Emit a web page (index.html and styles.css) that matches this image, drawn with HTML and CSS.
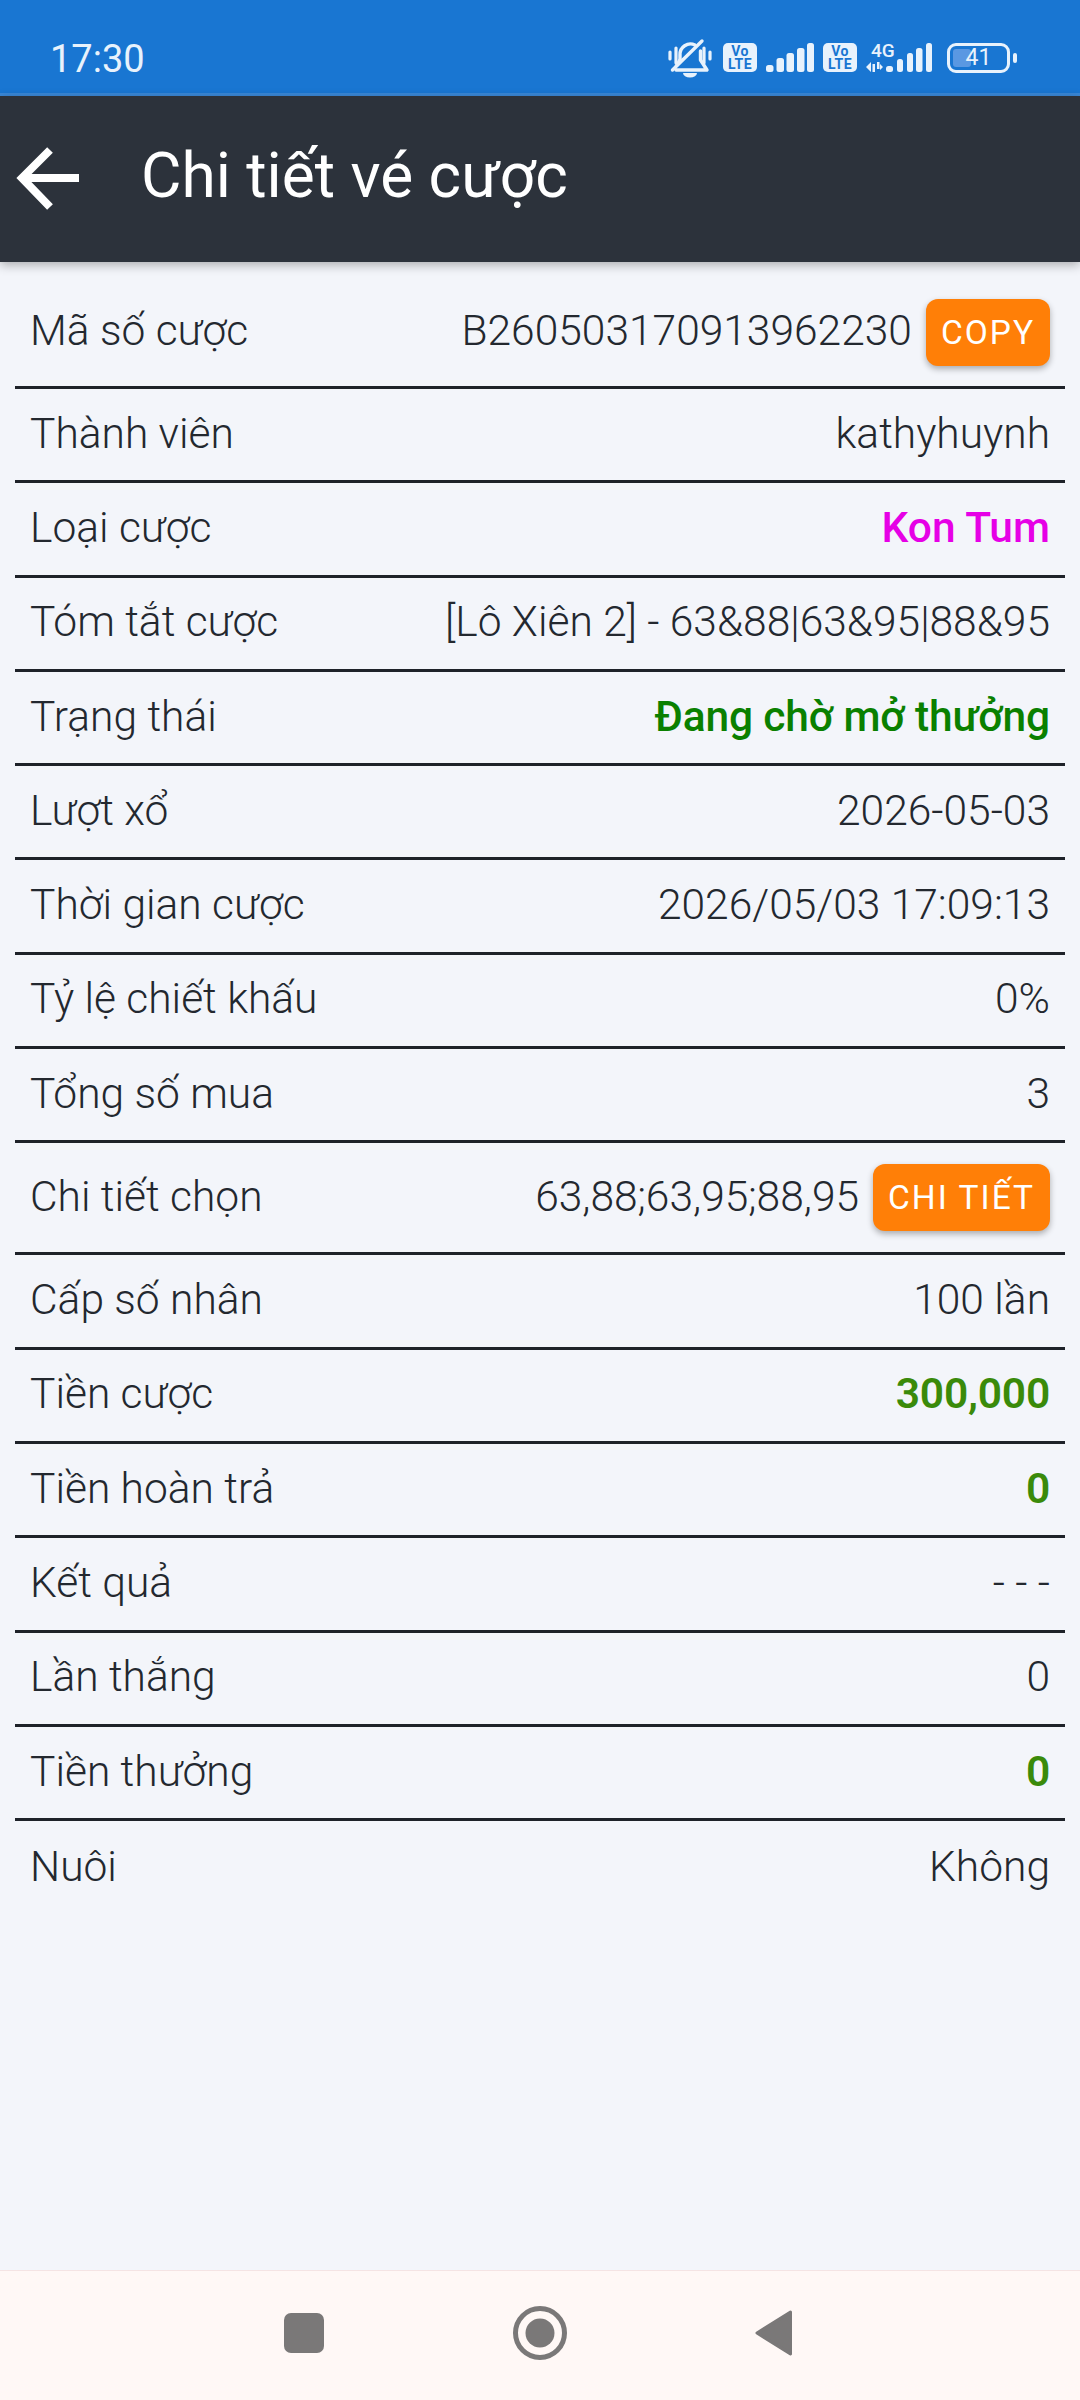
FILE: index.html
```html
<!DOCTYPE html>
<html lang="vi">
<head>
<meta charset="utf-8">
<title>Chi tiết vé cược</title>
<link rel="stylesheet" href="styles.css">
</head>
<body>
<div class="screen">
  <header class="status">
    <span class="clock">17:30</span>
    <div class="status-icons">
      <svg class="ic-bell" width="46" height="40" viewBox="0 0 46 40">
        <g fill="none" stroke="#e8f2fc" stroke-linecap="round" stroke-linejoin="round">
          <path d="M3 14v7M9 10v15M37 10v15M43 14v7" stroke-width="3.200"/>
          <path d="M13 22v-5A10.500 10.500 0 0 1 28 7M33.500 13v9L40 32H9" stroke-width="3.400"/>
          <path d="M13 22 8 30M5.500 32 35 3" stroke-width="3.400"/>
        </g>
        <path d="M16 35h14a7 4.500 0 0 1-14 0z" fill="#e8f2fc"/>
      </svg>
      <span class="volte"><b>Vo</b><b>LTE</b></span>
      <svg class="ic-sig" width="48" height="29" viewBox="0 0 48 29">
        <g fill="#e8f2fc"><rect x="0" y="22" width="7.500" height="7" rx="2.500"/><rect x="10.500" y="15" width="7.500" height="14" rx="2.500"/><rect x="20.500" y="10" width="7.500" height="19" rx="2.500"/><rect x="31" y="5" width="7.500" height="24" rx="2.500"/><rect x="41" y="0" width="7" height="29" rx="2.500"/></g>
      </svg>
      <span class="volte volte-2"><b>Vo</b><b>LTE</b></span>
      <span class="net"><span class="net-4g">4G</span>
        <svg class="net-arrows" width="17" height="10" viewBox="0 0 17 10"><g fill="#e8f2fc"><path d="M0 5l5-5v10zM6.500 2H9v8H6.500zM11 0h2.500v7H11zM14 2v6l3-3z"/></g></svg>
      </span>
      <svg class="ic-sig2" width="46" height="29" viewBox="0 0 46 29">
        <g fill="#e8f2fc"><rect x="0" y="23" width="7" height="6" rx="2.500"/><rect x="11" y="16" width="6" height="13" rx="2.500"/><rect x="21" y="10" width="6" height="19" rx="2.500"/><rect x="30" y="5" width="6.500" height="24" rx="2.500"/><rect x="40" y="0" width="6" height="29" rx="2.500"/></g>
      </svg>
      <span class="battery"><span class="battery-fill"></span><span class="battery-num">41</span></span>
      <span class="battery-tip"></span>
    </div>
  </header>
  <div class="appbar">
    <svg class="back" width="64" height="64" viewBox="0 0 64 64"><path d="M63 32H8M34 4 6 32l28 29" fill="none" stroke="#fff" stroke-width="8"/></svg>
    <h1 class="title">Chi tiết vé cược</h1>
  </div>
  <main class="list">
    <div class="row row-first"><span>Mã số cược</span><span class="val"><span>B260503170913962230</span><button class="btn">COPY</button></span></div>
    <div class="row"><span>Thành viên</span><span class="val">kathyhuynh</span></div>
    <div class="row"><span>Loại cược</span><span class="val magenta">Kon Tum</span></div>
    <div class="row"><span>Tóm tắt cược</span><span class="val">[Lô Xiên 2] - 63&amp;88|63&amp;95|88&amp;95</span></div>
    <div class="row"><span>Trạng thái</span><span class="val green">Đang chờ mở thưởng</span></div>
    <div class="row"><span>Lượt xổ</span><span class="val">2026-05-03</span></div>
    <div class="row"><span>Thời gian cược</span><span class="val">2026/05/03 17:09:13</span></div>
    <div class="row"><span>Tỷ lệ chiết khấu</span><span class="val">0%</span></div>
    <div class="row"><span>Tổng số mua</span><span class="val">3</span></div>
    <div class="row row-btn"><span>Chi tiết chọn</span><span class="val"><span>63,88;63,95;88,95</span><button class="btn">CHI TIẾT</button></span></div>
    <div class="row"><span>Cấp số nhân</span><span class="val">100 lần</span></div>
    <div class="row"><span>Tiền cược</span><span class="val money">300,000</span></div>
    <div class="row"><span>Tiền hoàn trả</span><span class="val money">0</span></div>
    <div class="row"><span>Kết quả</span><span class="val">- - -</span></div>
    <div class="row"><span>Lần thắng</span><span class="val">0</span></div>
    <div class="row"><span>Tiền thưởng</span><span class="val money">0</span></div>
    <div class="row row-last"><span>Nuôi</span><span class="val">Không</span></div>
  </main>
  <nav class="navbar">
    <svg width="40" height="40" viewBox="0 0 40 40"><rect x="0" y="0" width="40" height="40" rx="7" fill="#7a7878"/></svg>
    <svg width="54" height="54" viewBox="0 0 54 54"><circle cx="27" cy="27" r="24.500" fill="none" stroke="#7a7878" stroke-width="5"/><circle cx="27" cy="27" r="14.500" fill="#7a7878"/></svg>
    <svg width="38" height="46" viewBox="0 0 38 46"><path d="M35.500 2 2 23l33.500 21z" fill="#7a7878" stroke="#7a7878" stroke-width="3" stroke-linejoin="round"/></svg>
  </nav>
</div>
</body>
</html>
```

FILE: styles.css
```css
* { box-sizing: border-box; }
html, body { margin: 0; padding: 0; }
body { width: 1080px; height: 2400px; overflow: hidden; font-family: Roboto, "Noto Sans", sans-serif; background: #f3f5fa; }
.screen { width: 1080px; height: 2400px; display: flex; flex-direction: column; }
.status { height: 96px; background: #1976d2; border-bottom: 3px solid #3a88d8; display: flex; align-items: center; justify-content: space-between; padding: 25px 63px 0 50px; flex: none; }
.clock { color: #e8f2fc; font-size: 38px; font-weight: 400; line-height: 1; }
.status-icons { display: flex; align-items: center; margin-bottom: 3px; }
.ic-bell { flex: none; margin-right: 10px; }
.volte { width: 34px; height: 29px; background: #e8f2fc; border-radius: 5px; color: #1976d2; display: flex; flex-direction: column; align-items: center; justify-content: center; font-size: 14px; line-height: 13px; letter-spacing: .5px; }
.volte b { font-weight: 700; }
.ic-sig { flex: none; margin: 0 9px; }
.net { display: flex; flex-direction: column; align-items: flex-start; width: 20px; height: 29px; margin-left: 9px; color: #e8f2fc; white-space: nowrap; }
.net-4g { font-size: 19px; line-height: 16px; font-weight: 500; margin: 0 0 0 5px; height: 19px; }
.net-arrows { display: block; }
.ic-sig2 { flex: none; }
.battery { position: relative; width: 63px; height: 30px; border: 3px solid #e8f2fc; border-radius: 9px; margin-left: 15px; display: flex; align-items: center; justify-content: center; overflow: hidden; }
.battery-fill { position: absolute; left: 3px; top: 3px; bottom: 3px; width: 18px; background: #5a98e2; border-radius: 3px; }
.battery-num { position: relative; color: #e8f2fc; font-size: 23px; line-height: 1; }
.battery-tip { width: 4px; height: 10px; background: #e8f2fc; border-radius: 2px; margin-left: 3px; }
.appbar { height: 166px; background: #2c323b; display: flex; align-items: center; padding-left: 16px; flex: none; box-shadow: 0 3px 10px rgba(0,0,0,.3); position: relative; z-index: 1; }
.back { flex: none; margin-bottom: 3px; overflow: visible; }
.title { margin: 0 0 5px 61px; color: #fff; font-size: 62.200px; font-weight: 400; line-height: 1; }
.list { flex: 1; padding: 0 15px; color: #23282f; font-size: 42.500px; font-weight: 300; }
.row { height: 94.300px; display: flex; align-items: center; justify-content: space-between; border-bottom: 3px solid #1e2229; padding: 0 0 3px 15px; }
.row-first { height: 127px; padding-top: 12px; padding-bottom: 0; }
.row-btn { height: 112px; padding-bottom: 3px; }
.row-btn .btn { margin-top: 3px; }
.row-last { border-bottom: 0; }
.val { display: flex; align-items: center; padding-right: 15px; text-align: right; }
.magenta { color: #e600e6; font-weight: 500; }
.green { color: #0a8000; font-weight: 500; letter-spacing: -.17px; }
.money { color: #3a8a0a; font-weight: 600; letter-spacing: -.2px; }
.btn { height: 67px; margin: 5px 0 0 14px; padding: 0 15px; border: 0; border-radius: 12px; background: #ff7f07; color: #fff; font-family: inherit; font-size: 33.500px; font-weight: 400; letter-spacing: 2px; box-shadow: 0 3px 6px rgba(0,0,0,.3); }
.navbar { height: 130px; background: #fff8f6; border-top: 1px solid #f5e4e4; display: flex; align-items: center; flex: none; padding: 0 0 6px 284px; gap: 188.500px; }
```
